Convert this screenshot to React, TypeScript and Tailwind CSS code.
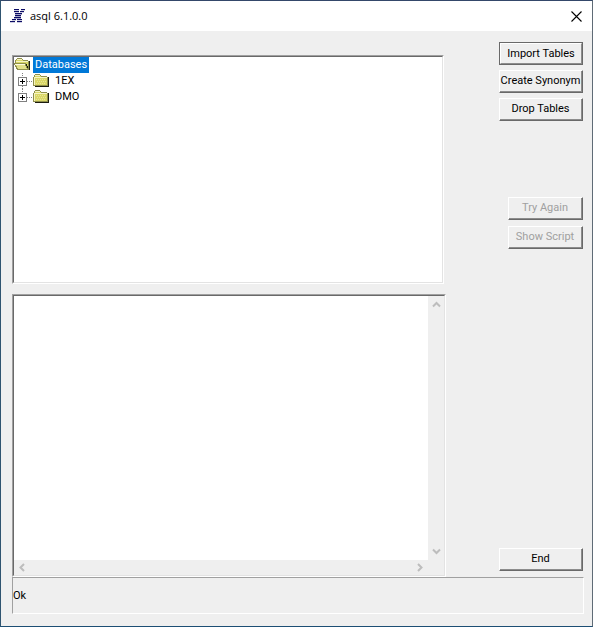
import { useState } from 'react';
import type { ButtonHTMLAttributes } from 'react';
import { clsx } from 'clsx';

const databases = ['1EX', 'DMO'];

const sunken =
  'border border-t-[#a0a0a0] border-l-[#a0a0a0] border-r-white border-b-white';
const sunkenInner =
  'border border-t-[#696969] border-l-[#696969] border-r-[#e3e3e3] border-b-[#e3e3e3]';

// Thick and thin strokes of a slanted X, cut into horizontal stripes
function AppLogo() {
  const rows = [
    [5, 5, 12, 4],
    [5, 5, 11, 4],
    [6, 7, 6, 7],
    [6, 6, 6, 6],
    [5, 7, 5, 7],
    [3, 4, 8, 5],
    [1, 5, 8, 5],
  ];
  return (
    <svg width="17" height="14" viewBox="0 0 17 14" shapeRendering="crispEdges" aria-hidden="true">
      {rows.map(([x1, w1, x2, w2], i) => (
        <g key={i} fill="#0c0c66">
          <rect x={x1} y={i * 2} width={w1} height="1" />
          <rect x={x2} y={i * 2} width={w2} height="1" />
          <rect x={x1} y={i * 2 + 1} width={w1} height="1" opacity="0.2" />
          <rect x={x2} y={i * 2 + 1} width={w2} height="1" opacity="0.2" />
        </g>
      ))}
    </svg>
  );
}

function FolderIcon() {
  return (
    <svg width="16" height="16" viewBox="0 0 16 16" shapeRendering="crispEdges" aria-hidden="true">
      <path d="M2 13h13V4h1v10H2z" fill="#1c1c10" />
      <path d="M1 3h1V2h5v1h1v1h7v9H1z" fill="#dad768" />
      <path d="M0 4h1v9H0zM1 3h1v1H1zM2 1h5v1H2zM1 2h1v1H1zM7 2h1v1H7zM8 3h6v1H8zM14 4h1v9h-1zM1 12h14v1H1z" fill="#8f8f4c" />
      <path d="M2 2h5v1H2zM1 4h13v1H1zM1 5h1v7H1z" fill="#f6f4c4" />
      <path d="M3 6.500h10M4 8.500h10M3 10.500h10" stroke="#e9e796" strokeDasharray="1 1" />
    </svg>
  );
}

function OpenFolderIcon() {
  return (
    <svg width="17" height="16" viewBox="0 0 17 16" shapeRendering="crispEdges" aria-hidden="true">
      <path d="M3 13h13V4h-1v9z" fill="#1c1c10" />
      <path d="M2 3h1V2h5v1h1v1h5v9H3L2 7z" fill="#dad768" />
      <path d="M1 3h1v3H1zM2 2h1v1H2zM3 1h5v1H3zM8 2h1v1H8zM9 3h5v1H9zM14 4h1v9h-1z" fill="#8f8f4c" />
      <path d="M3 2h5v1H3zM2 4h12v1H2z" fill="#f6f4c4" />
      <path d="M0 6h12v1h1v2h1v2h1v2H3v-1H2v-2H1V8H0z" fill="#8f8f4c" />
      <path d="M1 7h10v2h1v2h1v1H4v-1H3V9H2V8H1z" fill="#e3e08a" />
      <path d="M1 7h10v1H1z" fill="#fffde0" />
      <path d="M12 7h1v2h1v2h-1V9h-1z" fill="#1c1c10" />
    </svg>
  );
}

function Chevron({ d }: { d: string }) {
  return (
    <svg width="9" height="9" viewBox="0 0 9 9" fill="none" stroke="#bdbdbd" strokeWidth="2" aria-hidden="true">
      <path d={d} />
    </svg>
  );
}

interface PushButtonProps extends ButtonHTMLAttributes<HTMLButtonElement> {
  primary?: boolean;
}

function PushButton({ primary, children, ...rest }: PushButtonProps) {
  return (
    <button
      type="button"
      className={clsx(
        'h-[23px] w-full border bg-[#efefef] whitespace-nowrap disabled:text-[#a0a0a0]',
        primary ? 'border-[#696969]' : 'border-t-white border-l-white border-r-[#696969] border-b-[#696969]',
      )}
      {...rest}
    >
      <span
        className={clsx(
          'flex h-full items-center justify-center border-r border-b border-[#8c8c8c]',
          primary && 'border-t border-l border-t-white border-l-white',
        )}
      >
        {children}
      </span>
    </button>
  );
}

function DatabaseTree() {
  const [selected, setSelected] = useState('Databases');
  const label = (name: string) =>
    clsx('h-4 px-0.5', selected === name ? 'bg-[#0078d7] text-white' : 'text-black');

  return (
    <div className={clsx('mr-0.5 mb-2.5 h-[229px]', sunken)}>
      <div className={clsx('h-full overflow-hidden bg-white', sunkenInner)}>
        <div className="flex h-4 items-center gap-0.5">
          <OpenFolderIcon />
          <button type="button" className={label('Databases')} onClick={() => setSelected('Databases')}>
            Databases
          </button>
        </div>
        <ul>
          {databases.map((name, i) => (
            <li key={name} className="flex h-4 items-center pl-1">
              <button type="button" aria-label={`Expand ${name}`}>
                <svg width="15" height="16" viewBox="0 0 15 16" shapeRendering="crispEdges">
                  <path d="M4.5 0v4M9 8.5h6" stroke="#808080" strokeDasharray="1 1" />
                  {i < databases.length - 1 && (
                    <path d="M4.5 13v3" stroke="#808080" strokeDasharray="1 1" />
                  )}
                  <rect x="0.5" y="4.5" width="8" height="8" fill="#fff" stroke="#808080" />
                  <path d="M2 8.5h5M4.5 6v5" stroke="#000" />
                </svg>
              </button>
              <FolderIcon />
              <button type="button" className={clsx('ml-1', label(name))} onClick={() => setSelected(name)}>
                {name}
              </button>
            </li>
          ))}
        </ul>
      </div>
    </div>
  );
}

function ScriptBox() {
  return (
    <div className={clsx('flex flex-1 flex-col', sunken)}>
      <div className={clsx('flex flex-1 flex-col bg-[#efefef]', sunkenInner)}>
        <div className="flex flex-1">
          <textarea aria-label="Script" className="min-w-0 flex-1 resize-none bg-white outline-none" />
          <div className="flex w-4 flex-col items-center justify-between py-1">
            <button type="button" aria-label="Scroll up">
              <Chevron d="M1 6.500l3.500-3.500L8 6.500" />
            </button>
            <button type="button" aria-label="Scroll down">
              <Chevron d="M1 2.500l3.500 3.500L8 2.500" />
            </button>
          </div>
        </div>
        <div className="flex h-[15px] items-center justify-between pr-5 pl-1">
          <button type="button" aria-label="Scroll left">
            <Chevron d="M6 1L2.500 4.500L6 8" />
          </button>
          <button type="button" aria-label="Scroll right">
            <Chevron d="M3 1l3.500 3.500L3 8" />
          </button>
        </div>
      </div>
    </div>
  );
}

export default function App() {
  return (
    <div className="flex min-h-screen flex-col border border-t-[#34486a] border-r-[#5f6b76] border-b-[#1d4e74] border-l-[#2f5470] bg-[#efefef] font-[Roboto,'Liberation_Sans',sans-serif] text-[11px] leading-4 text-black">
      <header className="flex h-[30px] items-center bg-white pr-2.5 pl-2">
        <AppLogo />
        <h1 className="ml-1 flex-1 font-['Open_Sans',sans-serif] text-[11px]">asql 6.1.0.0</h1>
        <button type="button" aria-label="Close">
          <svg width="11" height="11" viewBox="0 0 11 11" stroke="#000" strokeWidth="1.1" aria-hidden="true">
            <path d="M0.500 0.500l10 10M10.500 0.500l-10 10" />
          </svg>
        </button>
      </header>

      <main className="flex flex-1 flex-col pr-2 pb-3 pl-[11px]">
        <div className="flex flex-1 gap-[53px]">
          <div className="flex min-w-0 flex-1 flex-col pt-6">
            <DatabaseTree />
            <ScriptBox />
          </div>
          <div className="mr-px flex w-21 flex-col pt-[11px] pb-1.5">
            <div className="flex flex-col gap-[5px]">
              <PushButton primary>Import Tables</PushButton>
              <PushButton>Create Synonym</PushButton>
              <PushButton>Drop Tables</PushButton>
            </div>
            <div className="mt-19 ml-[9px] flex flex-col gap-1.5">
              <PushButton disabled>Try Again</PushButton>
              <PushButton disabled>Show Script</PushButton>
            </div>
            <div className="mt-auto">
              <PushButton>End</PushButton>
            </div>
          </div>
        </div>
        <footer className={clsx('flex h-[37px] items-center', sunken)}>
          <output>Ok</output>
        </footer>
      </main>
    </div>
  );
}
